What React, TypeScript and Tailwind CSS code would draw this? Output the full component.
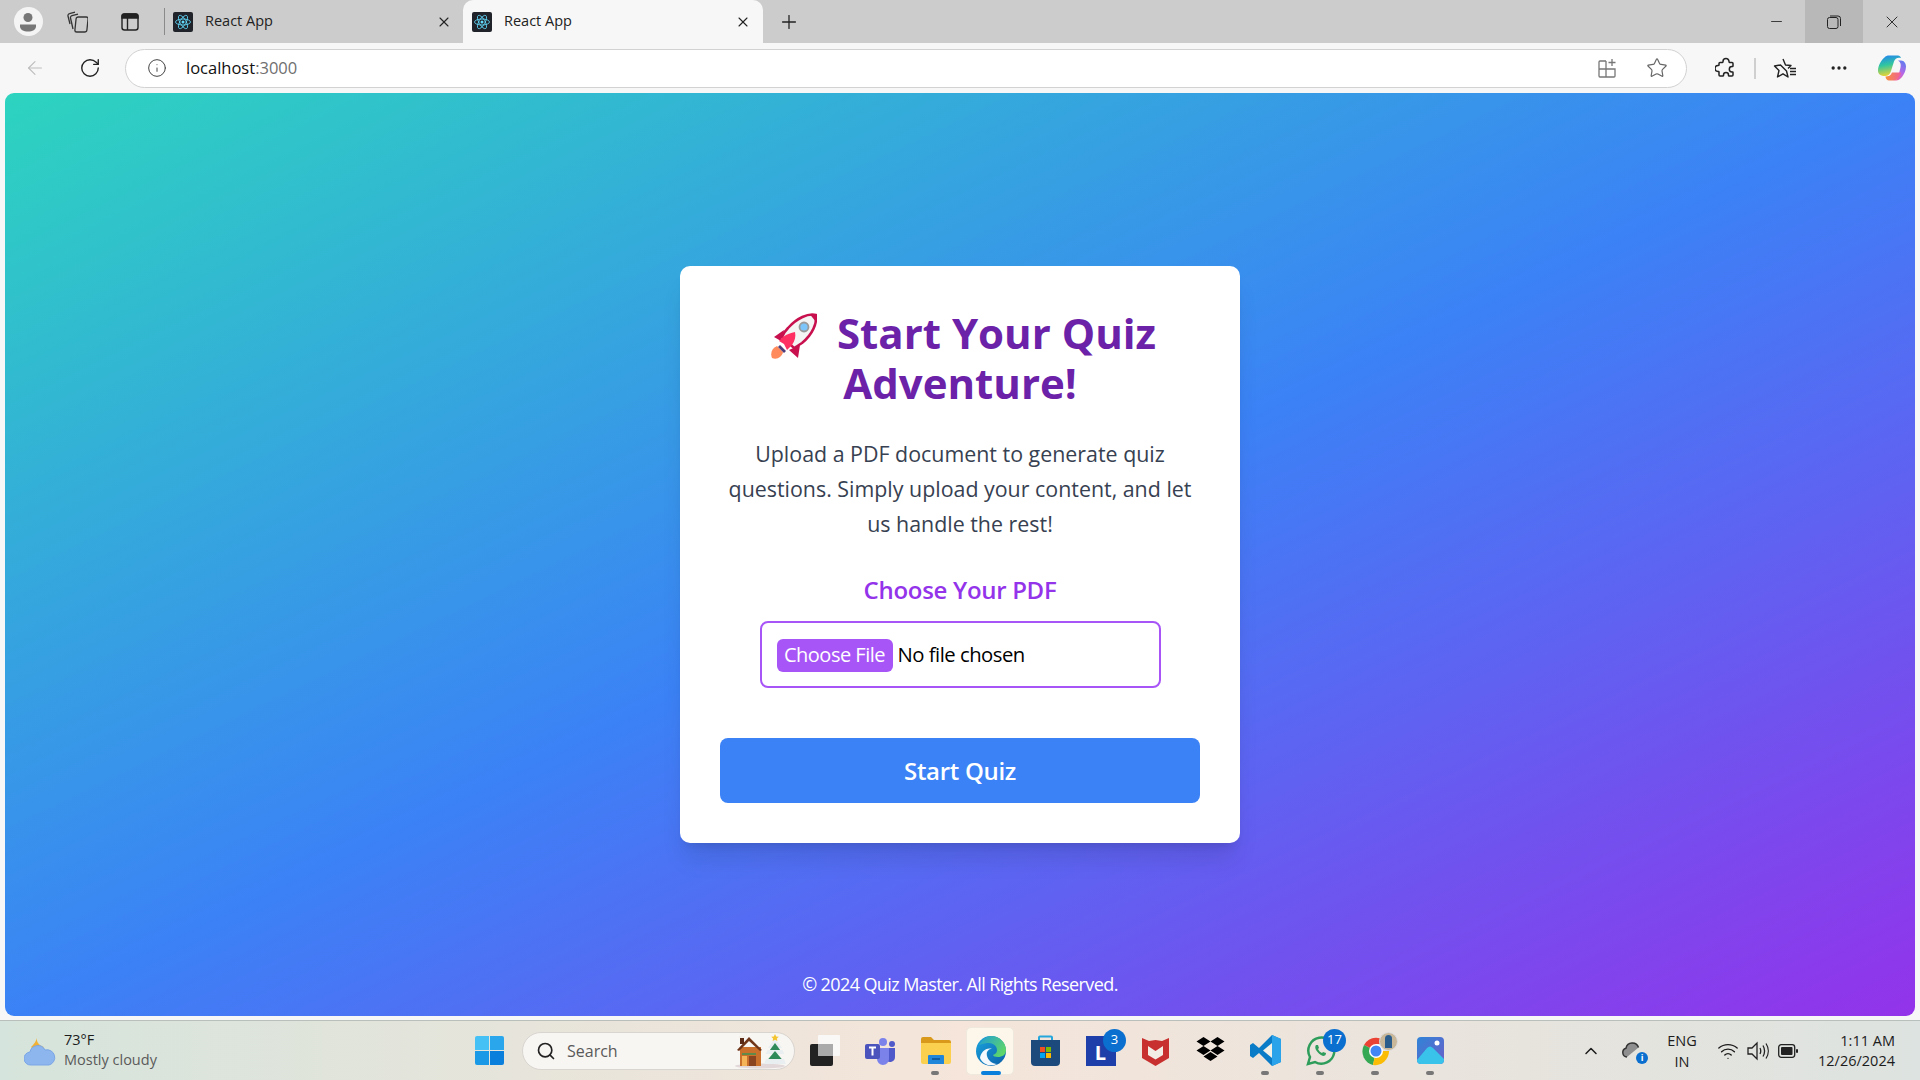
import { ArrowLeft, ChevronUp, Info, Minus, MoreHorizontal, Plus, RotateCw, Search, Star, Wifi, X } from 'lucide-react';

const UI_FONT = 'font-["Open_Sans","Noto_Sans",sans-serif]';

function ReactIcon() {
  return (
    <span className="w-5 h-5 shrink-0 rounded-[2px] bg-[#20232a] flex items-center justify-center">
      <svg width="18" height="18" viewBox="-12 -12 24 24" fill="none" stroke="#61dafb" strokeWidth="1.1">
        <circle r="2" fill="#61dafb" stroke="none" />
        <ellipse rx="10" ry="4" />
        <ellipse rx="10" ry="4" transform="rotate(60)" />
        <ellipse rx="10" ry="4" transform="rotate(120)" />
      </svg>
    </span>
  );
}

function Tab({ active }: { active?: boolean }) {
  return (
    <div
      className={
        active
          ? 'w-[300px] h-[43px] pl-[9px] pr-[12px] flex items-center bg-[#f7f7f7] rounded-t-[10px]'
          : 'w-[298px] h-[43px] pl-[8px] pr-[11px] flex items-center'
      }
    >
      <ReactIcon />
      <span className="ml-[12px] -mt-[2px] text-[14.5px] text-[#222] flex-1">React App</span>
      <X size={16} strokeWidth={1.6} className="text-[#222]" />
    </div>
  );
}

function TitleBar() {
  return (
    <div className="h-[43px] bg-[#cccccc] flex items-center shrink-0">
      <div className="w-[55px] flex justify-center pl-[1px]">
        <span className="w-[29px] h-[29px] rounded-full bg-[#f4f4f4] flex items-center justify-center">
          <svg width="18" height="20" viewBox="0 0 18 20" fill="#777">
            <circle cx="9" cy="5.5" r="4.5" />
            <path d="M1 12.5h16v2c0 3-3.5 5-8 5s-8-2-8-5z" />
          </svg>
        </span>
      </div>
      <div className="w-[44px] flex justify-center">
        <svg width="22" height="24" viewBox="0 0 22 24" fill="none" stroke="#333" strokeWidth="1.3">
          <rect x="8" y="7" width="12" height="15" rx="2" transform="skewX(-6) translate(3 0)" />
          <path d="M7 19 4.500 8a2 2 0 0 1 1.500-2.400L12 4.200" />
          <path d="M4 14 2 6a2 2 0 0 1 1.500-2.400L9 2.200" />
        </svg>
      </div>
      <div className="w-[62px] mr-[3px] flex justify-center">
        <svg width="20" height="20" viewBox="0 0 20 20" fill="none" stroke="#222" strokeWidth="1.4">
          <rect x="2" y="2" width="16" height="16" rx="2.500" />
          <path d="M2 4.500a2.500 2.500 0 0 1 2.500-2.500h11a2.500 2.500 0 0 1 2.500 2.500V6H2z" fill="#222" />
          <path d="M7.500 6v12" />
        </svg>
      </div>
      <span className="w-px h-[27px] bg-[#8a8a8a]" />
      <Tab />
      <Tab active />
      <div className="w-[52px] flex justify-center">
        <Plus size={22} strokeWidth={1.4} className="text-[#222]" />
      </div>
      <div className="flex-1" />
      <div className="w-[57px] h-full flex items-center justify-center">
        <Minus size={17} strokeWidth={1.2} className="text-[#222]" />
      </div>
      <div className="w-[58px] h-full bg-[#b8b8b8] flex items-center justify-center">
        <svg width="14" height="14" viewBox="0 0 14 14" fill="none" stroke="#222" strokeWidth="1">
          <rect x="0.500" y="2.500" width="10.500" height="11" rx="2" />
          <path d="M3 1h8a2.500 2.500 0 0 1 2.500 2.500V11" />
        </svg>
      </div>
      <div className="w-[57px] h-full flex items-center justify-center">
        <X size={20} strokeWidth={1.1} className="text-[#222]" />
      </div>
    </div>
  );
}

function Copilot() {
  return (
    <svg width="28" height="28" viewBox="0 0 28 28">
      <defs>
        <linearGradient id="cpA" x1="0.3" y1="0" x2="0.5" y2="1">
          <stop offset="0" stopColor="#2488ec" />
          <stop offset="0.45" stopColor="#30c6a0" />
          <stop offset="1" stopColor="#f4d52c" />
        </linearGradient>
        <linearGradient id="cpB" x1="0.8" y1="0" x2="0.3" y2="1">
          <stop offset="0" stopColor="#5a7cf0" />
          <stop offset="0.55" stopColor="#b868e6" />
          <stop offset="1" stopColor="#f45f9c" />
        </linearGradient>
        <linearGradient id="cpC" x1="0" y1="0" x2="1" y2="0">
          <stop offset="0" stopColor="#f7913a" />
          <stop offset="1" stopColor="#f0609a" />
        </linearGradient>
      </defs>
      <path d="M7 3c1-1 2-1.500 4-1.500h9c1.500 0 2.500 1 3 2.500-3-1-6 0-7 3.500L13 17c-1 3.500-3 5-6 5-4 0-7-1.500-7-5.500C0 12 3 6 7 3z" fill="url(#cpA)" />
      <path d="M20 6.500h3c3 0 5 3 5 6 0 4-2 8-4 10.500-2 2.500-4 3.500-6 3.500h-3c3 0 4.500-2 5.500-5l2-8c.5-2.500.5-5-2.500-7z" fill="url(#cpB)" />
      <path d="M7.500 22.500c3 0 5.500-1 6.500-4h9c-1 4-4 8-7 8H11c-2 0-3.500-2-3.500-4z" fill="url(#cpC)" />
    </svg>
  );
}

function Toolbar() {
  return (
    <div className="h-[50px] bg-[#f7f7f7] flex items-center shrink-0">
      <div className="w-[68px] flex justify-center pl-[1px]">
        <ArrowLeft size={22} strokeWidth={1.2} className="text-[#bdbdbd]" />
      </div>
      <div className="w-[44px] flex justify-center">
        <RotateCw size={22} strokeWidth={1.5} className="text-[#222]" />
      </div>
      <div className="w-[13px]" />
      <div className="w-[1562px] h-[39px] bg-white border border-[#d2d2d2] rounded-full flex items-center">
        <Info size={20} strokeWidth={1.2} className="ml-[21px] text-[#444]" />
        <span className="ml-[19px] text-[16.500px] text-[#111]">
          localhost<span className="text-[#6f6f6f]">:3000</span>
        </span>
        <div className="flex-1" />
        <svg width="20" height="20" viewBox="0 0 20 20" fill="none" stroke="#777" strokeWidth="1.300" className="mr-[29px]">
          <path d="M9 3H3a1 1 0 0 0-1 1v14a1 1 0 0 0 1 1h14a1 1 0 0 0 1-1v-7H2M9 3v16" />
          <path d="M15 1v7M11.500 4.500h7" />
        </svg>
        <Star size={22} strokeWidth={1.300} className="mr-[18px] text-[#666]" />
      </div>
      <div className="w-[16px]" />
      <div className="w-[46px] flex justify-center">
        <svg width="22" height="22" viewBox="0 0 22 22" fill="none" stroke="#222" strokeWidth="1.500" strokeLinejoin="round">
          <path d="M8 4.500a3 3 0 0 1 6 0c0 .5 0 1 .5 1H17a1 1 0 0 1 1 1v2.500c0 .6-.8.5-1 .5a2.700 2.700 0 0 0 0 5.400c.4 0 1-.1 1 .6V18a1 1 0 0 1-1 1h-3c-.6 0-.5-.7-.5-1a2.500 2.500 0 0 0-5 0c0 .3.100 1-.5 1H5a1 1 0 0 1-1-1v-3c0-.6-.6-.5-1-.5a3 3 0 0 1 0-6c.4 0 1 0 1-.5V6.500a1 1 0 0 1 1-1h2.500c.5 0 .5-.5.5-1z" />
        </svg>
      </div>
      <span className="w-[2px] h-[21px] bg-[#cfcfcf] ml-[5px] mr-[7px]" />
      <div className="w-[44px] flex justify-center">
        <svg width="24" height="22" viewBox="0 0 24 22" fill="none" stroke="#222" strokeWidth="1.400" strokeLinejoin="round">
          <path d="M10 2 12.500 8l5.500.500-3 3M13.500 14l1.500 6L10 16.800 4.500 20 6 13.500 1.500 9 7.500 8z" />
          <path d="M17 11.500h6M17 14.500h6M17 17.500h6" />
        </svg>
      </div>
      <div className="w-[64px] flex justify-center">
        <MoreHorizontal size={20} strokeWidth={2} className="text-[#222]" />
      </div>
      <div className="w-[42px] flex justify-center">
        <Copilot />
      </div>
    </div>
  );
}

function Rocket() {
  return (
    <svg width="46" height="46" viewBox="0 0 46 46" className="shrink-0">
      <path d="M1 45c-2-5 0-10 5-12l6 6c-1 5-6 8-11 6z" fill="#ff8a5c" />
      <path d="M13 17 3 24l7 4z" fill="#c8104e" />
      <path d="M29 32 27 45 18 37z" fill="#c8104e" />
      <path d="M45 2c1 8-3 19-14 28-3 2-6 4-8 5L11 24c1-3 3-6 6-9C26 5 37 0 45 2z" fill="#f4f4f4" stroke="#c8104e" strokeWidth="2.500" />
      <path d="M39 1.500c3-.8 5.500-.5 6 .5.6 2 .6 4 0 7z" fill="#c8104e" />
      <circle cx="33" cy="14" r="4.500" fill="#7cc5fa" stroke="#9a9a9a" strokeWidth="1.800" />
      <path d="M24 19c1 4 0 9-3 13l-5 5-3-6-5-3 4-4c4-3 8-4 12-5z" fill="#ff2f63" />
      <path d="M9 32l6 6-2 2-6-6z" fill="#4d3a78" />
    </svg>
  );
}

function QuizCard() {
  return (
    <div className="w-[560px] bg-white rounded-[10px] p-[40px] shadow-xl text-center">
      <h1 className="mt-[2px] text-[42px] leading-[50px] font-bold text-[#6b21a8]">
        <span className="inline-flex align-middle translate-y-[-2px] ml-[7px] mr-[20px] h-[46px] -my-[10px]">
          <Rocket />
        </span>
        Start Your Quiz Adventure!
      </h1>
      <p className="mt-[28px] text-[21.400px] leading-[35px] text-[#374151]">
        Upload a PDF document to generate quiz questions. Simply upload your content, and let us handle the rest!
      </p>
      <label className="block mt-[33px] text-[24px] leading-[32px] font-semibold text-[#9333ea] tracking-[-0.3px]">
        Choose Your PDF
      </label>
      <div className="mt-[15px] mx-auto w-[401px] h-[67px] border-2 border-[#a855f7] rounded-lg px-[15px] flex items-center text-left">
        <span className="h-[33px] w-[116px] mt-[1px] bg-[#a855f7] rounded-md text-white text-[20px] tracking-[-0.5px] flex items-center justify-center">
          Choose File
        </span>
        <span className="ml-[5px] text-[20.300px] tracking-[-0.5px] text-black">No file chosen</span>
      </div>
      <button className="mt-[50px] w-full h-[65px] bg-[#3b82f6] rounded-lg text-white text-[24px] font-semibold tracking-[-0.3px]">
        Start Quiz
      </button>
    </div>
  );
}

function WeatherIcon() {
  return (
    <svg width="32" height="30" viewBox="0 0 32 30" className="shrink-0">
      <path d="M13 0c-1 5 1 9 7 11-3 4-10 4-13 0C9 9 13 5 13 0z" fill="#f2b134" />
      <path d="M7 29a6.500 6.500 0 0 1-1-13 8 8 0 0 1 15-2 7.500 7.500 0 0 1 4 15z" fill="#8db6ee" stroke="#7aa5e5" />
    </svg>
  );
}

function WindowsLogo() {
  return (
    <div className="w-[29px] h-[29px] grid grid-cols-2 gap-[1.500px]">
      <span className="rounded-tl-[2px] bg-[#45c1f5]" />
      <span className="rounded-tr-[2px] bg-[#2aa7ec]" />
      <span className="rounded-bl-[2px] bg-[#1a9ae6]" />
      <span className="rounded-br-[2px] bg-[#0a7fdc]" />
    </div>
  );
}

function SearchScene() {
  return (
    <svg width="52" height="36" viewBox="0 0 52 36" className="absolute right-[8px] top-0">
      <ellipse cx="26" cy="33" rx="25" ry="2.500" fill="#e2d8da" />
      {/* house */}
      <rect x="6" y="14" width="21" height="19" fill="#c8702c" />
      <path d="M3 17 15 4l13 13-2 1L15 8 5 18z" fill="#6e3518" />
      <rect x="6" y="3" width="4" height="8" fill="#5a2a16" />
      <path d="M5 3h6v2H5z" fill="#f3efe9" />
      <path d="M8 20h14v2H8z" fill="#5f8a4a" />
      <rect x="8" y="23" width="5" height="10" fill="#f6b458" />
      <rect x="15" y="23" width="7" height="10" fill="#8a4420" />
      {/* tree */}
      <path d="M41 5 34 15h14z" fill="#e9eff0" />
      <path d="M41 10 33 21h16z" fill="#2e8a58" />
      <path d="M33.500 17h15l2 4h-19z" fill="#e9eff0" />
      <path d="M41 18 31 30h20z" fill="#2e8a58" />
      <path d="M32 26h18l2 5H30z" fill="#e9eff0" />
      <path d="M41 1l1.200 2.400 2.600.3-1.900 1.800.5 2.500-2.400-1.200-2.400 1.200.5-2.500-1.900-1.800 2.600-.3z" fill="#f4c430" />
    </svg>
  );
}

function TaskSlot({ children, dot, active, badge }: { children: React.ReactNode; dot?: boolean; active?: boolean; badge?: string }) {
  return (
    <div className="relative w-[55px] h-[48px] flex items-center justify-center">
      {active && <span className="absolute left-[3px] right-[4px] inset-y-0 bg-[#fdf6ea] rounded-[5px] border border-[#efe8dc]" />}
      <span className="relative flex">{children}</span>
      {badge && (
        <span className="absolute top-[2px] right-[2px] min-w-[23px] h-[23px] px-[2px] rounded-full bg-[#0a6fcf] text-white text-[13px] flex items-center justify-center">
          {badge}
        </span>
      )}
      {dot && <span className="absolute bottom-[0px] left-[23px] w-[8px] h-[4px] rounded-full bg-[#777]" />}
      {active && <span className="absolute bottom-[0px] left-[18px] w-[20px] h-[4px] rounded-full bg-[#0a7fdc]" />}
    </div>
  );
}

function TaskIcons() {
  return (
    <div className="flex items-center">
      <TaskSlot>
        <svg width="31" height="31" viewBox="0 0 31 31">
          <rect x="0" y="9" width="23" height="22" rx="2" fill="#222" />
          <rect x="8" y="0" width="22" height="21" rx="1" fill="#fafafa" opacity="0.9" />
          <rect x="8" y="9" width="15" height="12" fill="#aaa" />
        </svg>
      </TaskSlot>
      <TaskSlot>
        <svg width="31" height="28" viewBox="0 0 31 28">
          <circle cx="18" cy="5" r="4" fill="#7b83eb" />
          <circle cx="27" cy="7" r="3" fill="#5059c9" />
          <path d="M21 11h9v9a5 5 0 0 1-9 3z" fill="#5059c9" />
          <path d="M9 11h15v11a6 6 0 0 1-12 0z" fill="#7b83eb" />
          <rect x="0" y="7" width="15" height="15" rx="2" fill="#4b53bc" />
          <path d="M4 10.500h7M7.500 10.500v8" stroke="#fff" strokeWidth="2" />
        </svg>
      </TaskSlot>
      <TaskSlot dot>
        <svg width="30" height="27" viewBox="0 0 30 27">
          <path d="M0 2a2 2 0 0 1 2-2h8l3 3h15a2 2 0 0 1 2 2v3H0z" fill="#d99a1c" />
          <path d="M0 6h30v19a2 2 0 0 1-2 2H2a2 2 0 0 1-2-2z" fill="#fbd04e" />
          <path d="M8 18h14a1 1 0 0 1 1 1v8H7v-8a1 1 0 0 1 1-1z" fill="#1f86d9" />
          <path d="M11 22h8" stroke="#0a4f92" strokeWidth="1.500" />
        </svg>
      </TaskSlot>
      <TaskSlot active>
        <svg width="30" height="30" viewBox="0 0 30 30">
          <defs>
            <linearGradient id="edgeA" x1="0" y1="0" x2="1" y2="1">
              <stop offset="0" stopColor="#1aa4de" />
              <stop offset="1" stopColor="#0c5fa8" />
            </linearGradient>
            <linearGradient id="edgeB" x1="0" y1="0" x2="1" y2="0.600">
              <stop offset="0" stopColor="#1e9bd8" />
              <stop offset="1" stopColor="#5ed66a" />
            </linearGradient>
          </defs>
          <circle cx="15" cy="15" r="15" fill="url(#edgeA)" />
          <path d="M3 9C6 3 11 0 15 0c9 0 15 7 15 14 0 5-4 7-8 7-3 0-5-1-5-2 3-1 4-3 4-5 0-4-4-7-8-7-5 0-9 2-10 2z" fill="url(#edgeB)" />
          <path d="M16 13c-4 0-6 3-5 7 1 4 5 8 10 8-6 3-14 1-17-6 1-6 6-11 12-9z" fill="#fff" opacity="0.95" />
        </svg>
      </TaskSlot>
      <TaskSlot>
        <svg width="29" height="31" viewBox="0 0 29 31">
          <path d="M8 5V2.500a1 1 0 0 1 1-1h11a1 1 0 0 1 1 1V5" fill="none" stroke="#25a6dc" strokeWidth="2" />
          <path d="M0 5h29v22a4 4 0 0 1-4 4H4a4 4 0 0 1-4-4z" fill="#1c4a7c" />
          <rect x="9" y="12" width="5" height="5" fill="#f25022" />
          <rect x="15" y="12" width="5" height="5" fill="#7fba00" />
          <rect x="9" y="18" width="5" height="5" fill="#00a4ef" />
          <rect x="15" y="18" width="5" height="5" fill="#ffb900" />
        </svg>
      </TaskSlot>
      <TaskSlot badge="3">
        <span className="w-[30px] h-[30px] bg-[#1e3faa] flex items-end justify-center pb-[3px] text-white text-[20px] leading-none font-bold">L</span>
      </TaskSlot>
      <TaskSlot>
        <svg width="27" height="30" viewBox="0 0 27 30">
          <path d="M0 2 7 5l6.500-1L20 5l7-3v20l-13.500 8L0 22z" fill="#c8302f" />
          <path d="M6 10l7.500 5 7.500-5v9l-7.500 4.500L6 19z" fill="#f2eee6" />
        </svg>
      </TaskSlot>
      <TaskSlot>
        <svg width="29" height="27" viewBox="0 0 29 27" fill="#000">
          <path d="M7.500 0 14.500 4.500 7.500 9 .5 4.500zM21.500 0l7 4.500-7 4.500-7-4.500zM7.500 9l7 4.500-7 4.500-7-4.500zM21.500 9l7 4.500-7 4.500-7-4.500zM14.500 15l7 4.500-7 4.500-7-4.500z" />
        </svg>
      </TaskSlot>
      <TaskSlot dot>
        <svg width="31" height="31" viewBox="0 0 31 31">
          <path d="M22 0 31 4v23l-9 4L9 18l-6 5-3-2v-11l3-2 6 5z" fill="#0a7cc7" />
          <path d="M22 0 31 4v23l-9 4z" fill="#2aa3ea" />
          <path d="M22 8v15l-9-7.500z" fill="#f3f0e8" />
        </svg>
      </TaskSlot>
      <TaskSlot dot badge="17">
        <svg width="30" height="30" viewBox="0 0 30 30" fill="none">
          <path d="M2 28l2-7A13 13 0 1 1 9 26z" stroke="#2e9c5a" strokeWidth="2.500" />
          <path d="M10 9c-1 1-1 3 0 5 2 3 4 5 7 6 2 0 3-1 3-3l-3-1-1 1c-2-1-3-2-4-4l1-1-1-3z" fill="#2e9c5a" />
        </svg>
      </TaskSlot>
      <TaskSlot dot>
        <span className="relative flex">
          <svg width="30" height="30" viewBox="0 0 30 30">
            <path d="M15 15 3 9a14 14 0 0 1 24-1H15z" fill="#ea4335" />
            <path d="M15 15 3 9a14 14 0 0 0 9 20z" fill="#34a853" />
            <path d="M15 15h13a14 14 0 0 1-16 14z" fill="#fbbc05" />
            <circle cx="15" cy="15" r="7" fill="#fff" />
            <circle cx="15" cy="15" r="5.500" fill="#4285f4" />
          </svg>
          <span className="absolute -top-[4px] -right-[7px] w-[19px] h-[19px] rounded-full bg-[#c9b79a] border border-[#ddd] flex items-center justify-center">
            <span className="w-[7px] h-[13px] rounded-t-full bg-[#2a5c8c]" />
          </span>
        </span>
      </TaskSlot>
      <TaskSlot dot>
        <svg width="27" height="27" viewBox="0 0 27 27">
          <defs>
            <linearGradient id="phA" x1="0" y1="0" x2="1" y2="1">
              <stop offset="0" stopColor="#2f84d8" />
              <stop offset="1" stopColor="#6c5fc8" />
            </linearGradient>
          </defs>
          <rect width="27" height="27" rx="4" fill="url(#phA)" />
          <circle cx="20" cy="6" r="2.500" fill="#fff" />
          <path d="M0 23 10 11c2-2 4-2 6 0l11 11v1a4 4 0 0 1-4 4H4a4 4 0 0 1-4-4z" fill="#39c2ea" />
        </svg>
      </TaskSlot>
    </div>
  );
}

function SystemTray() {
  return (
    <div className="flex items-center text-[#1c1c1c]">
      <ChevronUp size={20} strokeWidth={1.8} />
      <div className="relative w-[24px] h-[20px] ml-[20px]">
        <svg width="24" height="20" viewBox="0 0 24 20" fill="none" stroke="#333" strokeWidth="1.500">
          <path d="M6 16a4.500 4.500 0 0 1-1-8.800 6.500 6.500 0 0 1 12.500-.7" fill="#8f8f8f" />
        </svg>
        <span className="absolute -right-[3px] -bottom-[3px] w-[12px] h-[12px] rounded-full bg-[#0a6fcf] text-white text-[9px] leading-[12px] text-center font-bold">i</span>
      </div>
      <div className="w-[46px] ml-[14px] text-center text-[14.500px] leading-[21px]">
        <div>ENG</div>
        <div>IN</div>
      </div>
      <Wifi size={22} strokeWidth={1.500} className="ml-[12px]" />
      <svg width="22" height="20" viewBox="0 0 22 20" fill="none" stroke="#222" strokeWidth="1.300" className="ml-[8px]">
        <path d="M1 7h4l5-5v16l-5-5H1z" />
        <path d="M13 7c1 2 1 4 0 6M16 4.500c2 3.500 2 7.500 0 11M19 2.500c3 4.500 3 10.500 0 15" />
      </svg>
      <svg width="20" height="14" viewBox="0 0 20 14" className="ml-[9px]">
        <rect x="0.700" y="0.700" width="16" height="12.600" rx="2.500" fill="none" stroke="#222" strokeWidth="1.300" />
        <rect x="3" y="3" width="11.500" height="8" rx="1" fill="#222" />
        <rect x="18" y="5" width="2" height="4" rx="1" fill="#222" />
      </svg>
      <div className="w-[97px] text-right text-[14.500px] leading-[20px]">
        <div>1:11 AM</div>
        <div>12/26/2024</div>
      </div>
    </div>
  );
}

function Taskbar() {
  return (
    <div className="h-[60px] shrink-0 border-t border-[#b9bfba] flex items-center bg-gradient-to-r from-[#d5e4dc] via-[#f5e5da] to-[#dde3e0]">
      <div className="w-[475px] pl-[24px] flex items-center shrink-0">
        <WeatherIcon />
        <div className="ml-[8px] -mt-[2px] text-[14.500px] leading-[20px]">
          <div className="text-[#1c1c1c]">73°F</div>
          <div className="text-[#5a5a5a]">Mostly cloudy</div>
        </div>
      </div>
      <WindowsLogo />
      <div className="ml-[18px] w-[273px] h-[38px] bg-[#f8f6f3] border border-[#d8d4cf] rounded-full flex items-center relative shrink-0">
        <Search size={20} strokeWidth={2} className="ml-[13px] text-[#222]" />
        <span className="ml-[11px] text-[16px] text-[#5a5a5a]">Search</span>
        <SearchScene />
      </div>
      <div className="ml-[3px] shrink-0">
        <TaskIcons />
      </div>
      <div className="flex-1" />
      <div className="pr-[25px]">
        <SystemTray />
      </div>
    </div>
  );
}

export default function App() {
  return (
    <div className={`${UI_FONT} w-full h-screen flex flex-col overflow-hidden bg-[#f7f7f7]`}>
      <TitleBar />
      <Toolbar />
      <div className="flex-1 min-h-0 px-[5px] pb-[4px]">
        <main className="h-full rounded-[9px] bg-linear-to-br/srgb from-[#2dd4bf] via-[#3b82f6] to-[#9333ea] grid grid-rows-[1fr_auto_1fr] justify-items-center">
          <div />
          <QuizCard />
          <footer className="self-end pb-[20px] text-white text-[18px] leading-[24px] tracking-[-0.6px]">
            © 2024 Quiz Master. All Rights Reserved.
          </footer>
        </main>
      </div>
      <Taskbar />
    </div>
  );
}
